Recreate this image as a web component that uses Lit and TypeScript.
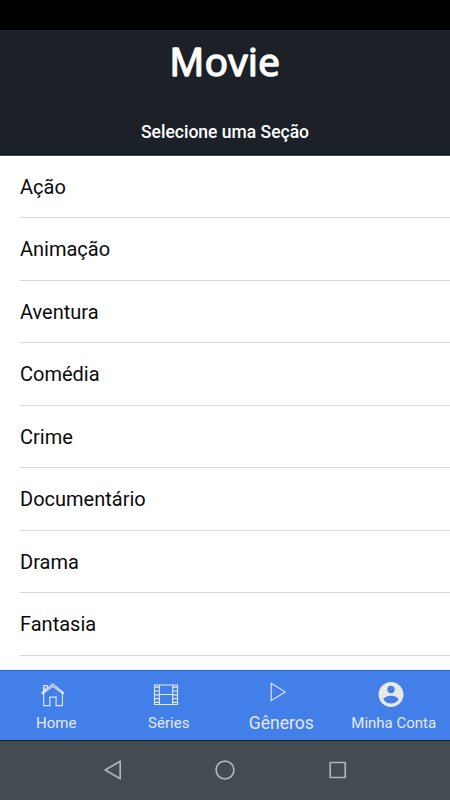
import { LitElement, html, css, svg } from "lit";
import { customElement } from "lit/decorators.js";
import { classMap } from "lit/directives/class-map.js";

const genres = ["Ação", "Animação", "Aventura", "Comédia", "Crime", "Documentário", "Drama", "Fantasia"];

const holes = [2.2, 6, 9.8, 13.6, 17.4];

const icons = {
  home: svg`<g fill="none" stroke="#e3e9f4" stroke-width="1.1">
    <path d="M3.6 10.8V2.6H7.2V5M5 4.6V8.4" />
    <path d="M1.9 9.8L12.8 .9L23.7 9.8L23 10.7L12.8 3.2L2.6 10.7Z" />
    <path d="M3.7 10V22.6H9.9V14.1H16.1V22.6H22.4V10" />
  </g>`,
  film: svg`<g fill="none" stroke="#e3e9f4" stroke-width="1.1">
    <path d="M1.5 2H24.5V21.5H1.5ZM6.3 2V21.5M19.7 2V21.5M6.3 11.5H19.7" />
    <path stroke-width="1.2" d="${holes.map((y) => `M1.5 ${y + 2}H6.3M19.7 ${y + 2}H24.5`).join("")}" />
  </g>`,
  play: svg`<path d="M3.2 .2V17.6L17.2 8.9Z" fill="none" stroke="#e9ecf2" stroke-width="1.1" />`,
  account: svg`<path fill="#e8e8e8" transform="translate(-2 -3.5) scale(1.25)" d="M12 2C6.48 2 2 6.48 2 12s4.48 10 10 10 10-4.48 10-10S17.52 2 12 2zm0 3c1.66 0 3 1.34 3 3s-1.34 3-3 3-3-1.34-3-3 1.34-3 3-3zm0 14.2c-2.5 0-4.71-1.28-6-3.22.03-1.99 4-3.08 6-3.08 1.99 0 5.97 1.09 6 3.08-1.29 1.94-3.5 3.22-6 3.22z" />`,
};

const tabs = [
  { label: "Home", icon: icons.home, active: false },
  { label: "Séries", icon: icons.film, active: false },
  { label: "Gêneros", icon: icons.play, active: true },
  { label: "Minha Conta", icon: icons.account, active: false },
];

@customElement("app-root")
export class AppRoot extends LitElement {
  static styles = css`
    :host {
      display: flex;
      flex-direction: column;
      height: 800px;
      overflow: hidden;
      background: #fff;
      font-family: Roboto, "Liberation Sans", sans-serif;
    }
    .status { flex: none; height: 30px; background: #000; }
    .header {
      flex: none;
      box-sizing: border-box;
      height: 125.7px;
      background: #1c2127;
      border-bottom: 1px solid #4b5158;
      box-shadow: inset 0 -1px #08101b;
      text-align: center;
    }
    .logo {
      height: 62px;
      font: 400 38.5px/62px "Open Sans", "Noto Sans", sans-serif;
      letter-spacing: 0.5px;
      color: #fff;
      -webkit-text-stroke: 1.2px #fff;
      text-shadow: 1px 0 #8c8c89, -1px 0 #8c8c89, 0 1px #8c8c89, 0 -1px #8c8c89;
    }
    .title {
      margin: 27px 0 0;
      font-size: 17.5px;
      line-height: 26px;
      font-weight: 500;
      color: #fff;
    }
    .list { flex: 1; min-height: 0; overflow: hidden; margin: 0; padding: 0 0 0 20px; list-style: none; }
    .row {
      box-sizing: border-box;
      height: 62.5px;
      border-bottom: 1px solid #d9d9d9;
      line-height: 62px;
      font-size: 20px;
      color: #0b0b0b;
    }
    .tabs {
      flex: none;
      box-sizing: border-box;
      height: 71px;
      display: grid;
      grid-template-columns: repeat(4, 1fr);
      background: #437fe8;
      border-top: 1px solid #1b6fd8;
      border-bottom: 1px solid #1c2127;
      box-shadow: 0 -1px #f2f3f0;
    }
    .tab {
      display: flex;
      flex-direction: column;
      align-items: center;
      padding-top: 12px;
      color: #e3e9f4;
      font-size: 15px;
      white-space: nowrap;
    }
    .tab svg { width: 26px; height: 24px; margin-right: 6px; overflow: visible; }
    .label { margin-top: 6px; line-height: 20px; }
    .active svg { margin-right: 1px; }
    .tab.active svg { margin-right: 0.5px; }
    .active .label { font-size: 17.5px; }
    .system {
      flex: none;
      box-sizing: border-box;
      height: 59px;
      padding-bottom: 2px;
      display: flex;
      justify-content: center;
      align-items: center;
      background: #454c51;
    }
    .system svg { width: 246px; height: 24px; }
  `;

  render() {
    return html`
      <div class="status"></div>
      <header class="header">
        <div class="logo">Movie</div>
        <h1 class="title">Selecione uma Seção</h1>
      </header>
      <ul class="list">
        ${genres.map((genre) => html`<li class="row">${genre}</li>`)}
      </ul>
      <nav class="tabs">
        ${tabs.map(
          (tab) => html`<div class=${classMap({ tab: true, active: tab.active })}>
            <svg viewBox="0 0 26 24">${tab.icon}</svg>
            <span class="label">${tab.label}</span>
          </div>`,
        )}
      </nav>
      <div class="system">
        <svg viewBox="0 0 246 24" fill="none" stroke="#b1b4b6" stroke-width="1.7" stroke-linejoin="round">
          <path d="M3.2 12L18.2 3.2V20.8Z" />
          <circle cx="123" cy="12" r="8.9" />
          <rect x="228.2" y="4.5" width="15" height="15" />
        </svg>
      </div>
    `;
  }
}
